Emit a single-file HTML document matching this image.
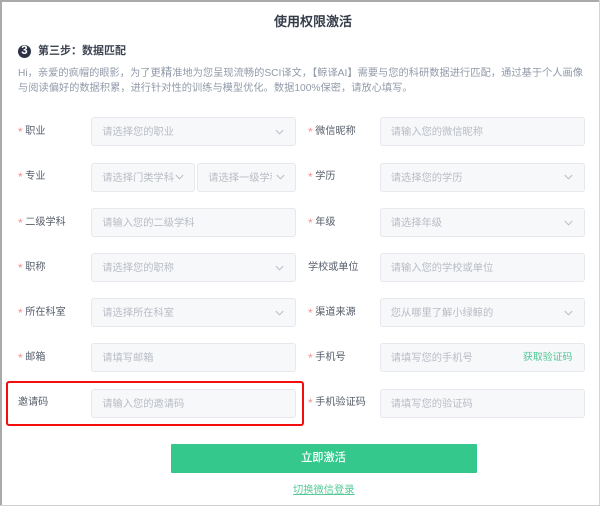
<!DOCTYPE html>
<html lang="zh-CN">
<head>
<meta charset="utf-8">
<style>
html,body{margin:0;padding:0;background:#fff}
body{position:relative;width:600px;height:506px;overflow:hidden;font-family:"Liberation Sans","Noto Sans CJK SC",sans-serif;font-size:10.25px;color:#5d6470}
#w{position:absolute;left:0;top:0;width:600px;height:506px;background:#fff;filter:blur(.3px)}
.a{position:absolute;white-space:nowrap}
.f{position:absolute;box-sizing:border-box;height:29px;background:#f7f8fa;border:1px solid #e6e8ee;border-radius:3px;color:#b8bcc4;line-height:30px;padding-left:10.3px;overflow:hidden;white-space:nowrap}
.l{left:91px;width:205px}
.r{left:379.5px;width:205.5px}
.lb{position:absolute;line-height:16px;white-space:nowrap;color:#565d6a;font-size:10.1px}
.s{color:#f98f8c;position:absolute;left:0;top:0;line-height:16px;font-size:12px}
.t{margin-left:7.3px}
svg.c{position:absolute;width:9px;height:6px;fill:none;stroke:#b5b9c1;stroke-width:.9}
</style>
</head>
<body>
<div id="w">
<div class="a" style="left:0;top:0;width:600px;height:1.5px;background:#a9abab"></div>
<div class="a" style="left:0;top:0;width:1.5px;height:506px;background:#a9abab"></div>
<div class="a" style="left:598.5px;top:0;width:1px;height:506px;background:#d4d4d4"></div>
<div class="a" style="left:0;top:504.5px;width:600px;height:1.5px;background:#cfcfcf"></div>

<div class="a" style="left:274px;top:13px;font-size:13px;line-height:18px;font-weight:500;color:#333a48;-webkit-text-stroke:.25px #333a48">使用权限激活</div>

<div class="a" style="left:18px;top:45px;width:13px;height:13px;border-radius:50%;background:#2c3245;color:#fff;font-weight:bold;font-size:11.5px;line-height:13px;text-align:center">3</div>
<div class="a" style="left:38px;top:42.5px;font-size:11px;line-height:17px;font-weight:bold;color:#3e4452">第三步：数据匹配</div>
<div class="a" style="left:18px;top:65.5px;line-height:15.5px;color:#929aa9;font-size:10.24px">Hi，亲爱的疯帽的眼影，为了更<span style="font-size:11.5px">精</span>准地为您呈现流畅的SCI译文，【鲸译AI】需要与您的科研数据进行<span style="font-size:10.5px">匹</span>配，通过基于个人画像<br>与阅读偏好的数据积累，进行针对性的训练与模型优化。数据100%保密，请放心填写。</div>

<!-- left labels -->
<div class="lb" style="left:18px;top:123.5px"><span class="s">*</span><span class="t">职业</span></div>
<div class="lb" style="left:18px;top:169px"><span class="s">*</span><span class="t">专业</span></div>
<div class="lb" style="left:18px;top:214.5px"><span class="s">*</span><span class="t">二级学科</span></div>
<div class="lb" style="left:18px;top:259.5px"><span class="s">*</span><span class="t">职称</span></div>
<div class="lb" style="left:18px;top:304.5px"><span class="s">*</span><span class="t">所在科室</span></div>
<div class="lb" style="left:18px;top:350px"><span class="s">*</span><span class="t">邮箱</span></div>
<div class="lb" style="left:18px;top:395px">邀请码</div>

<!-- left fields -->
<div class="f l" style="top:117px">请选择您的职业</div>
<div class="f" style="left:91px;top:162.5px;width:104px">请选择门类学科</div>
<div class="f" style="left:197px;top:162.5px;width:99px"><span style="display:block;width:64px;overflow:hidden">请选择一级学科</span></div>
<div class="f l" style="top:208px">请输入您的二级学科</div>
<div class="f l" style="top:253px">请选择您的职称</div>
<div class="f l" style="top:298.3px">请选择所在科室</div>
<div class="f l" style="top:343.3px">请填写邮箱</div>
<div class="f l" style="top:388.6px">请输入您的邀请码</div>

<!-- right labels -->
<div class="lb" style="left:308px;top:123.5px"><span class="s">*</span><span class="t">微信昵称</span></div>
<div class="lb" style="left:308px;top:169px"><span class="s">*</span><span class="t">学历</span></div>
<div class="lb" style="left:308px;top:214.5px"><span class="s">*</span><span class="t">年级</span></div>
<div class="lb" style="left:308px;top:259.5px">学校或单位</div>
<div class="lb" style="left:308px;top:304.5px"><span class="s">*</span><span class="t">渠道来源</span></div>
<div class="lb" style="left:308px;top:350px"><span class="s">*</span><span class="t">手机号</span></div>
<div class="lb" style="left:308px;top:395px"><span class="s">*</span><span class="t">手机验证码</span></div>

<!-- right fields -->
<div class="f r" style="top:117px">请输入您的微信昵称</div>
<div class="f r" style="top:162.5px">请选择您的学历</div>
<div class="f r" style="top:208px">请选择年级</div>
<div class="f r" style="top:253px">请输入您的学校或单位</div>
<div class="f r" style="top:298.3px">您从哪里了解小绿鲸的</div>
<div class="f r" style="top:343.3px">请填写您的手机号</div>
<div class="f r" style="top:388.6px">请填写您的验证码</div>
<div class="a" style="left:523px;top:350px;line-height:16px;font-size:9.9px;color:#4fc795">获取验证码</div>

<!-- chevrons -->
<svg class="c" style="left:275px;top:128.5px" viewBox="0 0 9 6"><path d="M.8 1 4.5 4.8 8.2 1"/></svg>
<svg class="c" style="left:175px;top:174px" viewBox="0 0 9 6"><path d="M.8 1 4.5 4.8 8.2 1"/></svg>
<svg class="c" style="left:276px;top:174px" viewBox="0 0 9 6"><path d="M.8 1 4.5 4.8 8.2 1"/></svg>
<svg class="c" style="left:275px;top:264.5px" viewBox="0 0 9 6"><path d="M.8 1 4.5 4.8 8.2 1"/></svg>
<svg class="c" style="left:275px;top:310px" viewBox="0 0 9 6"><path d="M.8 1 4.5 4.8 8.2 1"/></svg>
<svg class="c" style="left:564px;top:174px" viewBox="0 0 9 6"><path d="M.8 1 4.5 4.8 8.2 1"/></svg>
<svg class="c" style="left:564px;top:219.5px" viewBox="0 0 9 6"><path d="M.8 1 4.5 4.8 8.2 1"/></svg>
<svg class="c" style="left:564px;top:310px" viewBox="0 0 9 6"><path d="M.8 1 4.5 4.8 8.2 1"/></svg>

<!-- red highlight -->
<div class="a" style="left:5.5px;top:380.5px;width:298px;height:45px;box-sizing:border-box;border:2px solid #f30d0d;border-radius:3px"></div>

<!-- button and link -->
<div class="a" style="left:170.5px;top:443.5px;width:306px;height:29.5px;background:#34c88c;border-radius:1px;color:#fff;text-align:center;line-height:29px;font-size:11.2px;font-weight:500">立即激活</div>
<div class="a" style="left:293px;top:483px;line-height:15px;color:#55c99a;text-decoration:underline">切换微信登录</div>
</div>
</body>
</html>
